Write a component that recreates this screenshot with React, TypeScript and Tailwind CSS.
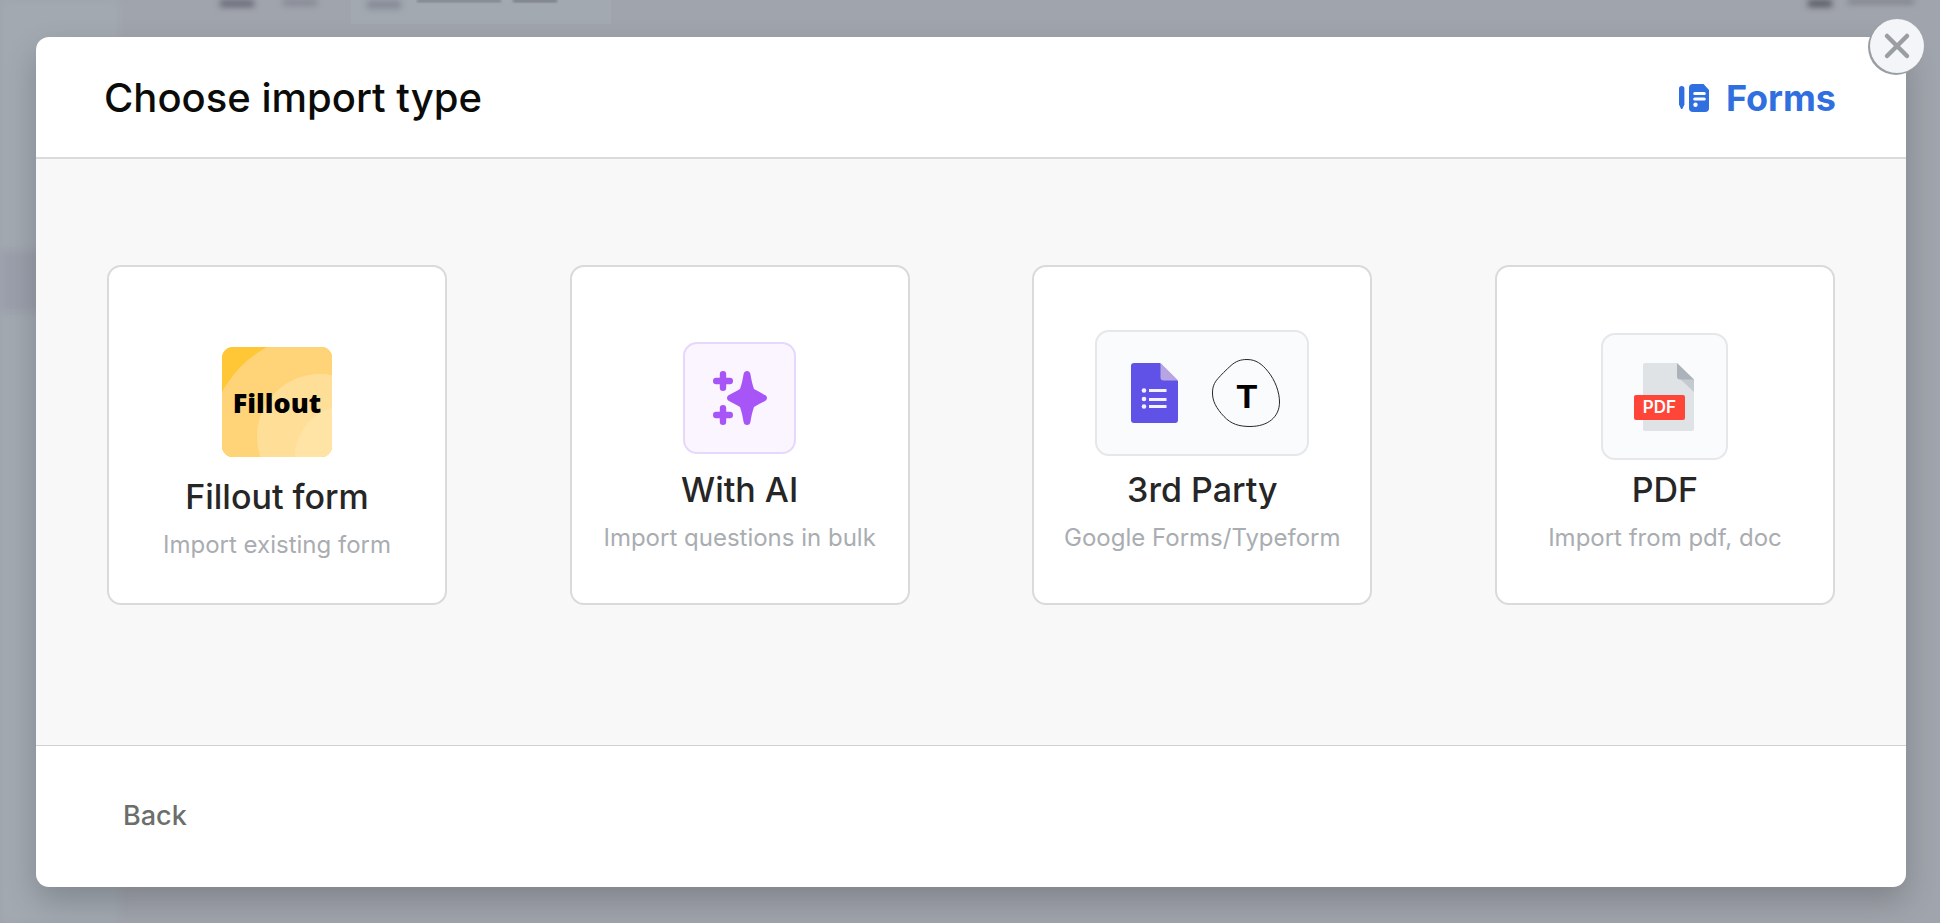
import React from "react";
import { X } from "lucide-react";

const cardBase =
  "flex h-[340px] w-[340px] shrink-0 flex-col items-center justify-end rounded-[14px] border-2 border-[#d9dadb] bg-white";

function Backdrop() {
  return (
    <div className="absolute inset-0 flex overflow-hidden bg-[#a0a4ac]" aria-hidden="true">
      <div className="w-[120px] bg-[#a2a9b1] pt-[250px] blur-[4px]">
        <div className="h-[62px] w-[120px] bg-[#9b9fab]" />
      </div>
      <div className="flex grow items-start pl-[100px]">
        <div className="h-[7px] w-[34px] bg-[#676a77] blur-[3px]" />
        <div className="ml-[29px] h-[5px] w-[34px] bg-[#7f828e] blur-[3px]" />
        <div className="ml-[34px] flex h-[24px] w-[260px] items-start bg-[#a2a9b0] pl-[16px]">
          <div className="h-[9px] w-[34px] bg-[#878a98] blur-[3px]" />
          <div className="ml-[16px] h-[2px] w-[84px] bg-[#777b83] blur-[1px]" />
          <div className="ml-[12px] h-[2px] w-[44px] bg-[#6f737b] blur-[1px]" />
        </div>
        <div className="ml-auto h-[7px] w-[24px] bg-[#555861] blur-[3px]" />
        <div className="mr-[26px] ml-[16px] h-[3px] w-[66px] bg-[#676a73] blur-[3px]" />
      </div>
    </div>
  );
}

function FilloutLogo() {
  return (
    <span className="relative flex h-[110px] w-[110px] items-center justify-center overflow-hidden rounded-[11px] bg-[#ffd478]">
      <svg viewBox="0 0 110 110" className="absolute inset-0 h-full w-full" aria-hidden="true">
        <rect width="110" height="110" fill="#ffc636" />
        <circle cx="97" cy="97" r="110" fill="#ffd478" />
        <circle cx="98" cy="90" r="63" fill="#ffdf98" />
        <circle cx="124" cy="110" r="51" fill="#ffe4a6" />
      </svg>
      <span className="relative font-['Noto_Sans',sans-serif] text-[27px] leading-none font-black text-black">
        Fillout
      </span>
    </span>
  );
}

function Sparkles() {
  return (
    <span className="flex h-[112px] w-[113px] items-center justify-center rounded-[14px] border-2 border-[#e6d8fb] bg-[#faf5ff]">
      <svg viewBox="0 0 54 54" className="h-[54px] w-[54px]" fill="#a855f7" aria-hidden="true">
        <path d="M34 0c1.900 0 3.200 1.400 3.400 3.100c1 5.600 1.800 9.900 3.600 14.900c4 2.400 7.700 4.200 11.400 6.200c2.100 1.200 2.100 4.400 0 5.600c-3.700 2-7.400 3.800-11.400 6.200c-1.800 5-2.600 9.300-3.600 14.900c-.2 1.700-1.500 3.100-3.400 3.100s-3.200-1.400-3.400-3.100c-1-5.600-1.800-9.900-3.600-14.900c-4-2.400-7.700-4.200-11.400-6.200c-2.100-1.200-2.100-4.400 0-5.600c3.700-2 7.400-3.800 11.400-6.200c1.800-5 2.600-9.300 3.600-14.900c.2-1.700 1.500-3.100 3.400-3.100z" />
        <path
          d="M10 3.200v13.600M3.200 10h13.600M10 37.200v13.600M3.200 44h13.600"
          stroke="#a855f7"
          strokeWidth="6.400"
          strokeLinecap="round"
        />
      </svg>
    </span>
  );
}

function ThirdParty() {
  return (
    <span className="flex h-[126px] w-[214px] items-center justify-center gap-[34px] rounded-[14px] border-2 border-[#e5e7eb] bg-[#fafbfd] pl-[6px]">
      <svg viewBox="0 0 47 60" className="h-[60px] w-[47px]" aria-hidden="true">
        <path d="M3 0h26l18 18v39q0 3-3 3H3q-3 0-3-3V3q0-3 3-3z" fill="#6052e6" />
        <path d="M29.500 0L47 17.500H32.500q-3 0-3-3z" fill="#b6a5e2" />
        <path d="M18 27.500h17.500M18 36.500h17.500M18 43.500h17.500" stroke="#f3f1ff" strokeWidth="3" />
        <circle cx="13" cy="27.500" r="2.300" fill="#f3f1ff" />
        <circle cx="13" cy="36" r="2.300" fill="#f3f1ff" />
        <circle cx="13" cy="43.500" r="2.300" fill="#f3f1ff" />
      </svg>
      <span className="relative flex h-[68px] w-[68px] items-center justify-center">
        <svg viewBox="0 0 68 68" className="absolute inset-0 h-full w-full" aria-hidden="true">
          <path
            d="M6 19.500C9 16 14 11 19 6.500C24 2 29 .500 35 .500C44 .500 50 5 56 12.500C63 21 67.500 33 67.500 43C67.500 58 56 67.500 38 67.500C27 67.500 19 65 12 57.500C4 49 .500 42 .500 34C.500 28 2 24 6 19.500z"
            fill="none"
            stroke="#26272b"
            strokeWidth="1"
          />
        </svg>
        <span className="relative pt-[6px] pl-[2px] font-['Liberation_Sans',Arial,sans-serif] text-[34px] leading-none font-bold text-black">
          T
        </span>
      </span>
    </span>
  );
}

function PdfIcon() {
  return (
    <span className="flex h-[127px] w-[127px] items-center justify-center rounded-[14px] border-2 border-[#e5e7eb] bg-[#fafbfd] pr-[2px]">
      <span className="relative flex h-[68px] w-[60px] items-center">
        <svg viewBox="0 0 60 68" className="absolute inset-0 h-full w-full" aria-hidden="true">
          <path d="M11 0h32l17 17v49q0 2-2 2H11q-2 0-2-2V2q0-2 2-2z" fill="#dfe3e5" />
          <path d="M45 15l15 14V16z" fill="#c5cad0" />
          <path d="M43 0l17 16.500H46q-3 0-3-3z" fill="#acb2b9" />
          <rect x="0" y="32" width="51" height="25" rx="2" fill="#ff4538" />
        </svg>
        <span className="relative mt-[22px] w-[51px] text-center font-['Inter',sans-serif] text-[17px] leading-none font-semibold text-white">
          PDF
        </span>
      </span>
    </span>
  );
}

type Option = { title: string; hint: string; icon: React.ReactNode; className: string };

const options: Option[] = [
  { title: "Fillout form", hint: "Import existing form", icon: <FilloutLogo />, className: "gap-[18px] pb-[36px]" },
  { title: "With AI", hint: "Import questions in bulk", icon: <Sparkles />, className: "gap-[14px] pb-[43px]" },
  { title: "3rd Party", hint: "Google Forms/Typeform", icon: <ThirdParty />, className: "gap-[12px] pb-[43px]" },
  { title: "PDF", hint: "Import from pdf, doc", icon: <PdfIcon />, className: "gap-[8px] pb-[43px]" },
];

export default function App() {
  return (
    <div className="relative min-h-screen overflow-hidden pt-[37px] pr-[34px] pb-[36px] pl-[36px] font-['Inter',sans-serif]">
      <Backdrop />
      <section
        role="dialog"
        aria-labelledby="dialog-title"
        className="relative flex min-h-[850px] flex-col rounded-[13px] bg-white shadow-[0_14px_32px_rgba(0,0,0,0.2)]"
      >
        <header className="flex h-[122px] items-center justify-between border-b-2 border-[#d9dadb] pt-[2px] pr-[70px] pl-[68px]">
          <h1 id="dialog-title" className="text-[40px] leading-[48px] font-medium text-[#0b0c0a]">
            Choose import type
          </h1>
          <div className="flex items-center gap-[17px] text-[#2f6fe0]">
            <svg viewBox="0 0 30 28" className="h-[28px] w-[30px]" fill="currentColor" aria-hidden="true">
              <path d="M0 4.500q0-2.500 2.700-2.500T5.400 4.500v16L3.600 24.500q-.9 1-1.800 0L0 20.500z" />
              <path d="M14 0h10.500l5.500 6v18q0 4-4 4H14q-4 0-4-4V4q0-4 4-4z" />
              <path d="M15.800 9.500h9.400M15.800 15h9.400" stroke="white" strokeWidth="3.200" strokeLinecap="round" />
              <circle cx="16.500" cy="20.700" r="2.200" fill="white" />
            </svg>
            <span className="text-[36px] leading-[44px] font-bold">Forms</span>
          </div>
        </header>

        <main className="flex grow items-start justify-between border-b border-[#cfd1d3] bg-[#f8f8f8] px-[71px] pt-[106px] pb-[140px]">
          {options.map((o) => (
            <button key={o.title} type="button" className={cardBase + " " + o.className}>
              {o.icon}
              <span className="flex flex-col items-center">
                <span className="text-[34px] leading-[44px] font-medium text-[#262626]">{o.title}</span>
                <span className="mt-[4px] text-[24px] leading-[44px] text-[#a9adb1]">{o.hint}</span>
              </span>
            </button>
          ))}
        </main>

        <footer className="flex h-[141px] items-center px-[87px] pb-[2px]">
          <button type="button" className="text-[27px] leading-[36px] font-medium text-[#6b6e6b]">
            Back
          </button>
        </footer>

        <button
          type="button"
          aria-label="Close"
          className="absolute -top-[18px] -right-[18px] flex h-[54px] w-[54px] items-center justify-center rounded-full bg-[#f3f5f8] shadow-[-1px_1px_0_1px_#9a9ea3]"
        >
          <X className="h-[40px] w-[40px] text-[#9a9ea2]" strokeWidth={2.7} />
        </button>
      </section>
    </div>
  );
}
